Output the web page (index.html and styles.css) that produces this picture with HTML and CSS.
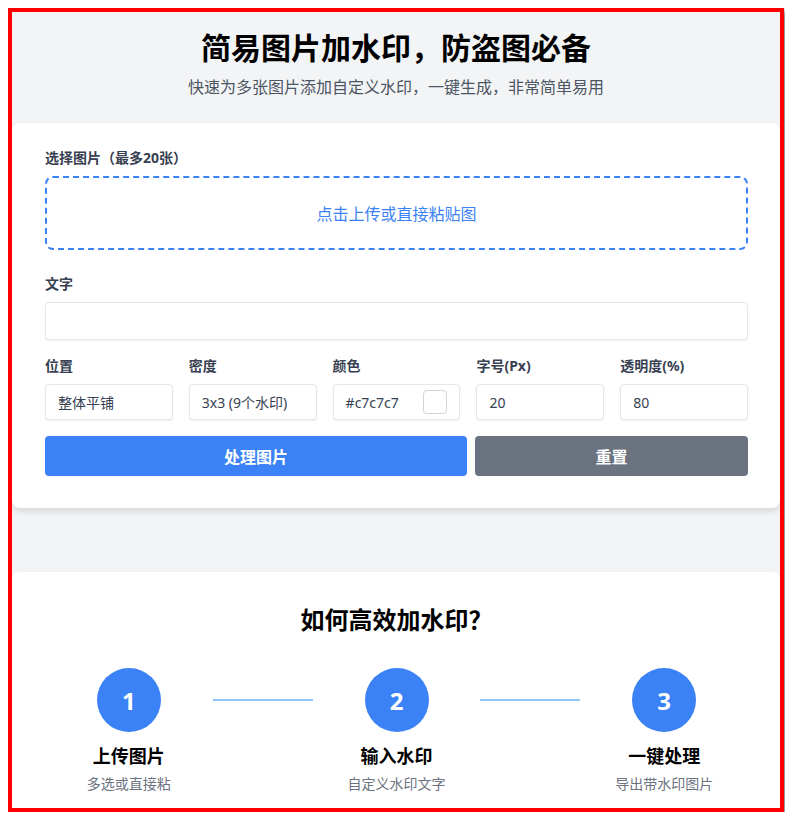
FILE: index.html
```html
<!DOCTYPE html>
<html lang="zh-CN">
<head>
  <meta charset="UTF-8" />
  <meta name="viewport" content="width=device-width, initial-scale=1.0"/>
  <title>简易图片加水印</title>
  <link rel="stylesheet" href="styles.css">
</head>
<body>
  <div class="frame">
    <header class="hero">
      <h1>简易图片加水印，防盗图必备</h1>
      <p>快速为多张图片添加自定义水印，一键生成，非常简单易用</p>
    </header>

    <!-- Watermark form -->
    <div class="card">
      <div class="form-group">
        <label>选择图片（最多20张）</label>
        <div class="dropzone">点击上传或直接粘贴图</div>
      </div>

      <div class="form-group tight">
        <label for="text">文字</label>
        <input type="text" id="text" class="text-input" />
      </div>

      <div class="options">
        <div class="field">
          <label>位置</label>
          <input type="text" value="整体平铺" readonly />
        </div>
        <div class="field">
          <label>密度</label>
          <input type="text" value="3x3 (9个水印)" readonly />
        </div>
        <div class="field">
          <label>颜色</label>
          <div class="color-input">
            <span>#c7c7c7</span>
            <span class="swatch"></span>
          </div>
        </div>
        <div class="field">
          <label>字号(Px)</label>
          <input type="text" value="20" />
        </div>
        <div class="field">
          <label>透明度(%)</label>
          <input type="text" value="80" />
        </div>
      </div>

      <div class="actions">
        <button class="btn-primary">处理图片</button>
        <button class="btn-reset">重置</button>
      </div>
    </div>

    <!-- How to section -->
    <div class="card howto">
      <h2>如何高效加水印？</h2>
      <div class="steps">
        <div class="step">
          <div class="circle">1</div>
          <h3>上传图片</h3>
          <p>多选或直接粘</p>
        </div>
        <div class="connector"></div>
        <div class="step">
          <div class="circle">2</div>
          <h3>输入水印</h3>
          <p>自定义水印文字</p>
        </div>
        <div class="connector"></div>
        <div class="step">
          <div class="circle">3</div>
          <h3>一键处理</h3>
          <p>导出带水印图片</p>
        </div>
      </div>
    </div>
  </div>
</body>
</html>
```

FILE: styles.css
```css
body {
  font-family: "Noto Sans", "Noto Sans CJK SC", sans-serif;
  margin: 8px;
  background: white;
  color: #111827;
}

.frame {
  width: 776px;
  height: 804px;
  box-sizing: border-box;
  border: 4px solid #ff0000;
  background-color: #f3f4f6;
  overflow: hidden;
  box-shadow: 3px 3px 4px rgba(0, 0, 0, 0.45);
}

.hero {
  text-align: center;
  padding: 18px 0 24px;
}

.hero h1 {
  font-size: 30px;
  line-height: 36px;
  font-weight: 700;
  margin: 0 0 9px;
  color: #000;
}

.hero p {
  font-size: 16px;
  line-height: 24px;
  margin: 0;
  color: #4b5563;
}

.card {
  background: white;
  border-radius: 8px;
  padding: 25px 32px 32px 33px;
  box-shadow: 0 4px 6px rgba(0, 0, 0, 0.1);
}

.form-group {
  margin-bottom: 24px;
}

.form-group.tight {
  margin-bottom: 16px;
}

label {
  display: block;
  font-size: 14px;
  line-height: 20px;
  font-weight: 700;
  color: #374151;
  margin-bottom: 8px;
}

.dropzone {
  height: 74px;
  box-sizing: border-box;
  border: 2px dashed #3b82f6;
  border-radius: 8px;
  display: flex;
  align-items: center;
  justify-content: center;
  color: #3b82f6;
  font-size: 16px;
}

input,
.color-input {
  width: 100%;
  box-sizing: border-box;
  border: 1px solid #e5e7eb;
  border-radius: 4px;
  box-shadow: 0 1px 2px rgba(0, 0, 0, 0.08);
  font-family: inherit;
  font-size: 14px;
  color: #374151;
  padding: 0 12px;
  height: 36px;
  background: white;
  outline: none;
}

.text-input {
  height: 38px;
}

.options {
  display: grid;
  grid-template-columns: repeat(5, 1fr);
  gap: 16px;
  margin-bottom: 16px;
}

.color-input {
  display: flex;
  align-items: center;
  justify-content: space-between;
}

.swatch {
  width: 24px;
  height: 24px;
  box-sizing: border-box;
  border: 1px solid #d1d5db;
  border-radius: 4px;
  background: white;
}

.actions {
  display: flex;
  gap: 8px;
}

.actions button {
  height: 40px;
  border: none;
  border-radius: 4px;
  color: white;
  font-family: inherit;
  font-size: 16px;
  font-weight: 700;
  cursor: pointer;
}

.btn-primary {
  width: 60%;
  background-color: #3b82f6;
}

.btn-reset {
  flex: 1;
  background-color: #6b7280;
}

.howto {
  margin-top: 64px;
  padding-top: 32px;
  height: 300px;
  text-align: center;
}

.howto h2 {
  font-size: 24px;
  line-height: 32px;
  font-weight: 700;
  color: #000;
  margin: 0 0 32px;
}

.steps {
  display: flex;
  align-items: flex-start;
}

.step {
  flex: 1;
  display: flex;
  flex-direction: column;
  align-items: center;
}

.circle {
  width: 64px;
  height: 64px;
  border-radius: 50%;
  background-color: #3b82f6;
  color: white;
  font-size: 24px;
  font-weight: 700;
  display: flex;
  align-items: center;
  justify-content: center;
}

.step h3 {
  font-size: 18px;
  line-height: 28px;
  font-weight: 700;
  color: #000;
  margin: 10px 0 4px;
}

.step p {
  font-size: 14px;
  line-height: 20px;
  color: #6b7280;
  margin: 0;
}

.connector {
  width: 100px;
  height: 2px;
  margin-top: 31px;
  background-color: #93c5fd;
}
```
